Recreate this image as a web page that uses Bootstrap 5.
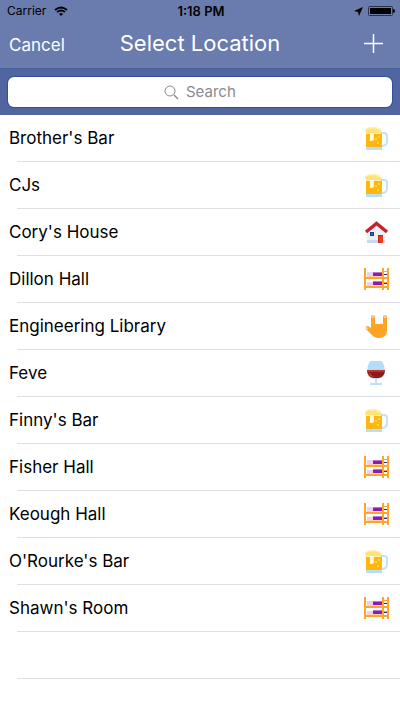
<!DOCTYPE html>
<html lang="en">
<head>
<meta charset="utf-8">
<meta name="viewport" content="width=device-width, initial-scale=1">
<title>Select Location</title>
<link rel="stylesheet" href="https://cdn.jsdelivr.net/npm/bootstrap@5.3.0/dist/css/bootstrap.min.css">
<style>
body { font-family: Inter, "Liberation Sans", sans-serif; color: #000; background: #fff; }
.top-area { background: #6a7bae; border-bottom: 1px solid #4a5f98; }
.status-bar { height: 22px; font-size: 12px; line-height: 22px; padding: 0 5px 0 7px; }
.clock { font-size: 13px; }
.title-bar { height: 46px; padding: 0 9px; }
.title-bar h1 { font-size: 22px; line-height: 42px; font-weight: 400; }
.bar-cancel { font-size: 17px; line-height: 22px; }
.side { flex: 1 1 0; }
.title-bar svg, .status-bar svg, .place svg, .search-box svg { display: block; }
.search-area { background: #5166a0; padding: 8px; }
.search-box { height: 30px; gap: 7px; box-shadow: 0 0 0 1px #2f519a; border-radius: 6px; cursor: text; color: #8a8a8f; }
.search-box input { width: 50px; font-size: 15px; line-height: 20px; outline: 0; }
.search-box input::placeholder { color: #8a8a8f; opacity: 1; }
.place { height: 47px; padding: 0 11px 0 9px; font-size: 17px; background: linear-gradient(#dfdfe1, #dfdfe1) 17px 100% / 100% 1px no-repeat; }
.place svg { margin-bottom: 2px; }
</style>
<script src="https://cdn.jsdelivr.net/npm/bootstrap@5.3.0/dist/js/bootstrap.bundle.min.js"></script>
</head>
<body>
<svg width="0" height="0" class="position-absolute" aria-hidden="true">
  <symbol id="beer" viewBox="0 0 26 26">
    <path d="M18 8h3q3 0 3 3v6q0 4-6 4" fill="none" stroke="#c3e3f7" stroke-width="2"/>
    <path d="M3 7h16v18H3z" fill="#b9def7"/>
    <path d="M3 7h16v14H3z" fill="#ffb70a"/>
    <path d="M3 21h16v1H3z" fill="#f2b536"/>
    <path d="M2 6q0-3 3-3 2-2 5-1 3-1 5 1 4 0 4 4-1 3-4 2h-4v5q0 2-2 2t-2-2V9H4Q2 9 2 6z" fill="#fff0b5"/>
    <path d="M3 5q2-3 5-1 4-2 7 1 3 0 3 3H3z" fill="#ffe27c"/>
    <path d="M6 8h4v6q0 2-2 2t-1-2V9z" fill="#fff9df"/>
    <g fill="#ffe06a"><circle cx="13" cy="14" r="1"/><circle cx="16" cy="12" r="1"/><circle cx="15" cy="18" r="1"/></g>
  </symbol>
  <symbol id="house" viewBox="0 0 26 26">
    <path d="M4 12 14 5l8 7v12H4z" fill="#edf0f8"/>
    <path d="M4 21h18v3H4z" fill="#cbd6f0"/>
    <path d="m3 13 10.500-8.500L24 13" fill="none" stroke="#c9202a" stroke-width="3.500"/>
    <path d="M7 13h4v4H7z" fill="#123f94"/><path d="M8 14h2v2H8z" fill="#2b6ac0"/>
    <path d="M15 16h5v8h-5z" fill="#e6401b"/><path d="M15 16h5v1h-4v7h-1z" fill="#bd2317"/>
  </symbol>
  <symbol id="bunk" viewBox="0 0 26 26">
    <g fill="#ffa52d"><path d="M1 2h2v22H1zM19 2h2v22h-2zM24 2h2v22h-2zM1 11h25v2H1zM1 20h25v2H1z"/><path d="M20 5h5v1h-5zM20 16h5v1h-5z"/></g>
    <g fill="#ead1f3"><path d="M4 6h6v5H4zM4 16h6v4H4z"/></g>
    <g fill="#8a1dad"><path d="M10 7h9v4h-9zM10 16h9v4h-9z"/></g>
    <g fill="#bd73d2"><path d="M10 6h9v1h-9zM10 15h9v1h-9z"/></g>
    <g fill="#3e285e"><path d="M21 8h3v1h-3zM21 17h3v1h-3z"/></g>
    <g fill="#ffd3a0"><path d="M4 10h15v1H4zM4 19h15v1H4z"/></g>
  </symbol>
  <symbol id="horns" viewBox="0 0 26 26">
    <path d="M8 4q0-2 2-2t2 2v7h8V4q0-2 2-2t2 2v13q0 8-8 8-5 0-8-4l-5-5q-1-2 1-3 2 0 4 2z" fill="#ffa324"/>
    <path d="M9 5q-1-3 1-3t1 3zM21 5q-1-3 1-3t1 3zM3 17q-1-3 1-3l2 1z" fill="#ffc6a3"/>
  </symbol>
  <symbol id="wine" viewBox="0 0 26 26">
    <path d="M7 1h12q3 5 3 10-1 7-7 8h-4q-6-1-7-8 0-5 3-10z" fill="#b5dcfb"/>
    <path d="M4 11h18q-1 7-7 7h-4q-6 0-7-7z" fill="#8d1a16"/>
    <path d="M4 10h18v2H4z" fill="#b5362a"/><path d="M7 13q1 3 5 4-5 0-6-4z" fill="#d05242"/>
    <path d="M12 18h2v5h5v2H7v-2h5z" fill="#bfe0f8"/>
  </symbol>
</svg>

<header class="top-area">
  <div class="status-bar d-flex align-items-center">
    <div class="side d-flex align-items-center gap-1"><span>Carrier</span>
      <svg class="ms-1" width="14" height="10" viewBox="0 0 14 10" fill="none" stroke="#000" stroke-width="1.800"><path d="M1 4q6-5 12 0M3 6q4-3 8 0"/><path d="m7 10-2-2q2-2 4 0z" fill="#000" stroke="none"/></svg>
    </div>
    <span class="clock fw-semibold">1:18 PM</span>
    <div class="side d-flex justify-content-end align-items-center gap-1">
      <svg width="10" height="10" viewBox="0 0 10 10"><path d="M10 1 6 10 5 6 1 5z"/></svg>
      <svg width="28" height="10" viewBox="0 0 28 10"><rect x="1.500" y=".5" width="24" height="9" rx="1" fill="none" stroke="#29324c"/><path d="M3 2h21v6H3z"/><path d="M26 3q2 0 2 2t-2 2z"/></svg>
    </div>
  </div>
  <nav class="title-bar d-flex align-items-start text-white" aria-label="Location">
    <div class="side pt-2 mt-1"><button type="button" class="bar-cancel btn p-0 border-0 text-white d-block">Cancel</button></div>
    <h1 class="m-0 text-nowrap">Select Location</h1>
    <div class="side pt-2 mt-1 d-flex justify-content-end"><button type="button" class="btn p-0 me-2 border-0 text-white" aria-label="Add location"><svg width="19" height="19" viewBox="0 0 19 19" stroke="#fff" stroke-width="1.500"><path d="M9.500 0v19M0 9.500h19"/></svg></button></div>
  </nav>
</header>
<form class="search-area" role="search">
  <label class="search-box d-flex justify-content-center align-items-center bg-white" for="query">
    <svg width="15" height="15" viewBox="0 0 15 15" fill="none" stroke="currentColor" aria-hidden="true"><circle cx="6" cy="6" r="5"/><path d="m10 10 4 4" stroke-width="1.500"/></svg>
    <input id="query" type="text" class="border-0 p-0 bg-transparent" placeholder="Search" aria-label="Search">
  </label>
</form>
<main>
  <ul class="list-unstyled m-0">
    <li class="place d-flex align-items-center justify-content-between">Brother's Bar<svg width="26" height="26"><use href="#beer"/></svg></li>
    <li class="place d-flex align-items-center justify-content-between">CJs<svg width="26" height="26"><use href="#beer"/></svg></li>
    <li class="place d-flex align-items-center justify-content-between">Cory's House<svg width="26" height="26"><use href="#house"/></svg></li>
    <li class="place d-flex align-items-center justify-content-between">Dillon Hall<svg width="26" height="26"><use href="#bunk"/></svg></li>
    <li class="place d-flex align-items-center justify-content-between">Engineering Library<svg width="26" height="26"><use href="#horns"/></svg></li>
    <li class="place d-flex align-items-center justify-content-between">Feve<svg width="26" height="26"><use href="#wine"/></svg></li>
    <li class="place d-flex align-items-center justify-content-between">Finny's Bar<svg width="26" height="26"><use href="#beer"/></svg></li>
    <li class="place d-flex align-items-center justify-content-between">Fisher Hall<svg width="26" height="26"><use href="#bunk"/></svg></li>
    <li class="place d-flex align-items-center justify-content-between">Keough Hall<svg width="26" height="26"><use href="#bunk"/></svg></li>
    <li class="place d-flex align-items-center justify-content-between">O'Rourke's Bar<svg width="26" height="26"><use href="#beer"/></svg></li>
    <li class="place d-flex align-items-center justify-content-between">Shawn's Room<svg width="26" height="26"><use href="#bunk"/></svg></li>
    <li class="place" aria-hidden="true"></li>
  </ul>
</main>
</body>
</html>
